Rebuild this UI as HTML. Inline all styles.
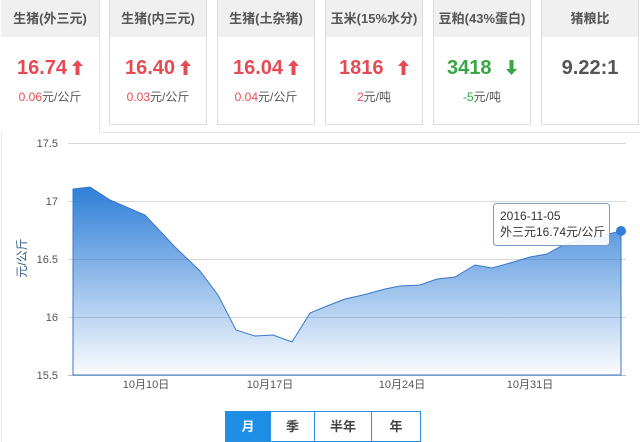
<!DOCTYPE html>
<html><head><meta charset="utf-8"><style>
*{margin:0;padding:0;box-sizing:border-box}
body{width:640px;height:442px;background:#fff;position:relative;overflow:hidden;font-family:"Liberation Sans","Noto Sans CJK SC",sans-serif}
.card{position:absolute;top:0;height:125px;width:98px;border:1px solid #dedede;border-top:none;background:#fff;text-align:center}
.card .h{height:37px;background:#f0f0f0;line-height:37px;font-size:13px;font-weight:bold;color:#555}
.card .v{margin-top:18px;font-size:20px;font-weight:bold;color:#e64b55;height:26px;line-height:26px}
.card .v.g{color:#3aa545}
.card .s{margin-top:7px;font-size:12px;color:#555}
.r{color:#e64b55}.g{color:#3aa545}
.arr{display:inline-block;margin-left:5px;vertical-align:-1px}
.btns{position:absolute;top:411px;left:225px;height:31px;display:flex;border:1px solid #2a8de0}
.btns div{height:29px;line-height:29px;text-align:center;font-size:13px;font-weight:bold;color:#444;border-left:1px solid #2a8de0}
</style></head><body>
<div style="position:absolute;left:1px;top:0;width:1px;height:442px;background:#e5e5e5"></div>
<div style="position:absolute;left:99px;top:0;width:1px;height:133px;background:#e5e5e5"></div>
<div style="position:absolute;left:99px;top:132px;width:541px;height:1px;background:#e5e5e5"></div>
<div class="card" style="left:1px;border:none;height:132px"><div class="h">生猪(外三元)</div><div class="v">16.74<svg class="arr" width="11" height="15" viewBox="0 0 11 15"><path d="M5.5 0L11 6H7.5V15H3.5V6H0Z" fill="#e64b55"/></svg></div><div class="s"><span class="r">0.06</span>元/公斤</div></div>
<div class="card" style="left:109px"><div class="h">生猪(内三元)</div><div class="v">16.40<svg class="arr" width="11" height="15" viewBox="0 0 11 15"><path d="M5.5 0L11 6H7.5V15H3.5V6H0Z" fill="#e64b55"/></svg></div><div class="s"><span class="r">0.03</span>元/公斤</div></div>
<div class="card" style="left:217px"><div class="h">生猪(土杂猪)</div><div class="v">16.04<svg class="arr" width="11" height="15" viewBox="0 0 11 15"><path d="M5.5 0L11 6H7.5V15H3.5V6H0Z" fill="#e64b55"/></svg></div><div class="s"><span class="r">0.04</span>元/公斤</div></div>
<div class="card" style="left:325px"><div class="h">玉米(15%水分)</div><div class="v">1816 <svg class="arr" style="margin-left:9px" width="11" height="15" viewBox="0 0 11 15"><path d="M5.5 0L11 6H7.5V15H3.5V6H0Z" fill="#e64b55"/></svg></div><div class="s"><span class="r">2</span>元/吨</div></div>
<div class="card" style="left:433px"><div class="h">豆粕(43%蛋白)</div><div class="v g">3418 <svg class="arr" style="margin-left:9px" width="11" height="15" viewBox="0 0 11 15"><path d="M5.5 15L11 9H7.5V0H3.5V9H0Z" fill="#3aa545"/></svg></div><div class="s"><span class="g">-5</span>元/吨</div></div>
<div class="card" style="left:541px"><div class="h">猪粮比</div><div class="v" style="color:#555">9.22:1</div></div>
<svg style="position:absolute;left:0;top:0" width="640" height="442">
<defs><linearGradient id="gr" x1="0" y1="0" x2="0" y2="1"><stop offset="0" stop-color="#2f7ed8"/><stop offset="1" stop-color="#2f7ed8" stop-opacity="0.02"/></linearGradient></defs>
<g stroke="#d8d8d8" stroke-width="1">
<line x1="68" y1="143.5" x2="626" y2="143.5"/><line x1="68" y1="201.5" x2="626" y2="201.5"/><line x1="68" y1="259.5" x2="626" y2="259.5"/><line x1="68" y1="317.5" x2="626" y2="317.5"/><line x1="68" y1="375.5" x2="626" y2="375.5" stroke="#c0c0c0"/></g>
<path d="M73,189 L90,187 L110,200 L145,215 L175,247 L200,271 L218,295 L236,330 L255,336 L273,335 L292,342 L310,313 L327,306 L345,299 L363,295 L385,289 L400,286 L420,285 L437,279 L455,277 L475,265 L492,268 L510,263 L530,257 L547,254 L563,245 L580,240 L600,236 L621,231 L621,375 L73,375Z" fill="url(#gr)" stroke="#3a78c8" stroke-width="1"/>
<circle cx="621" cy="231" r="5" fill="#2f7ed8"/>
<g font-size="11" fill="#555" text-anchor="end"><text x="58" y="147">17.5</text><text x="58" y="205">17</text><text x="58" y="263">16.5</text><text x="58" y="321">16</text><text x="58" y="379">15.5</text></g>
<text transform="translate(26,258) rotate(-90)" font-size="12" fill="#3d5e85" text-anchor="middle">元/公斤</text>
<g font-size="11" fill="#555" text-anchor="middle"><text x="146" y="388">10月10日</text><text x="270" y="388">10月17日</text><text x="402" y="388">10月24日</text><text x="530" y="388">10月31日</text></g>
<rect x="493.5" y="203.5" width="116" height="42" rx="3" fill="#fff" fill-opacity="0.92" stroke="#7d9bc0"/>
<text x="500" y="220" font-size="12" fill="#333">2016-11-05</text>
<text x="500" y="236" font-size="12" fill="#333">外三元16.74元/公斤</text>
</svg>
<div class="btns"><div style="width:44px;background:#1e8ee6;color:#fff;border-left:none">月</div><div style="width:44px">季</div><div style="width:57px">半年</div><div style="width:49px">年</div></div>
</body></html>
